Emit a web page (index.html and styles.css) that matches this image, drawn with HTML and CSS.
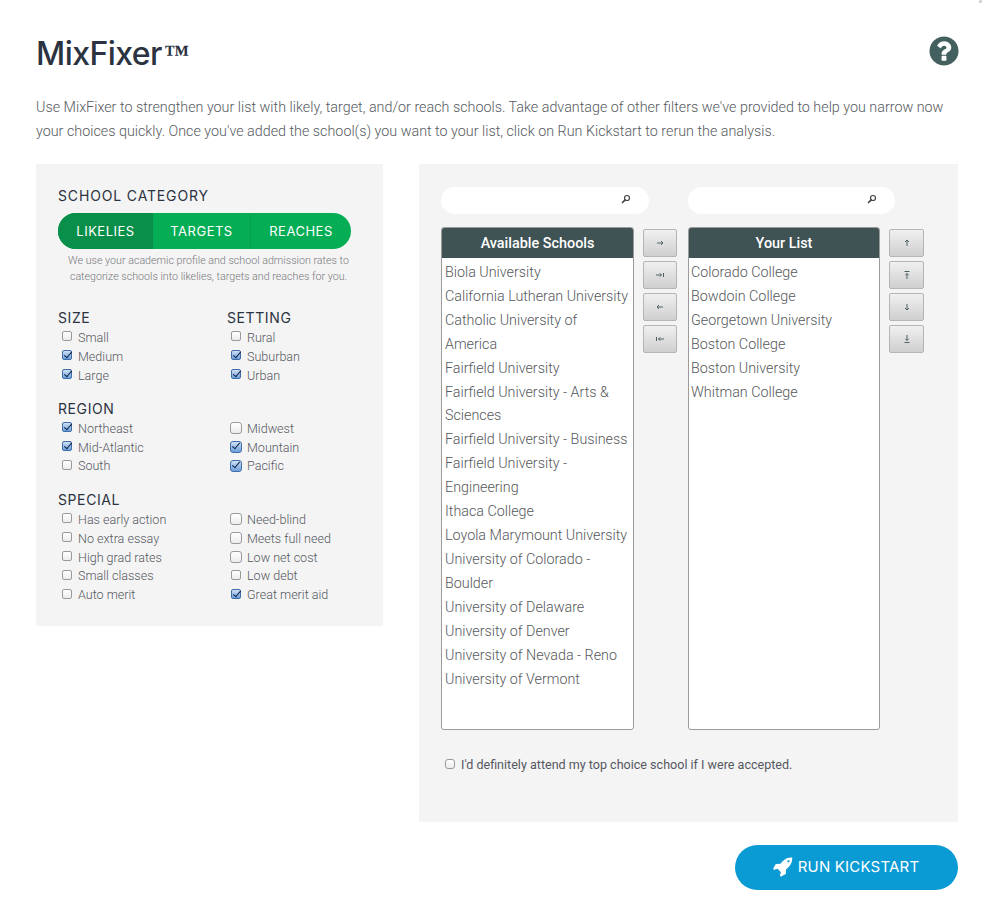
FILE: index.html
```html
<!DOCTYPE html>
<html lang="en">
<head>
<meta charset="utf-8">
<title>MixFixer</title>
<link rel="stylesheet" href="styles.css">
</head>
<body>
<span class="corner"></span>
<header class="top">
  <h1>MixFixer<span class="tm">™</span></h1>
  <svg class="help" viewBox="0 0 1792 1792"><path fill="#43605f" d="M1024 1376v-192q0-14-9-23t-23-9h-192q-14 0-23 9t-9 23v192q0 14 9 23t23 9h192q14 0 23-9t9-23zm256-672q0-88-55.5-163t-138.5-116-170-41q-243 0-371 213-15 24 8 42l132 100q7 6 19 6 16 0 25-12 53-68 86-92 34-24 86-24 48 0 85.5 26t37.5 59q0 38-20 61t-68 45q-63 28-115.5 86.5t-52.5 125.5v36q0 14 9 23t23 9h192q14 0 23-9t9-23q0-19 21.5-49.5t54.5-49.5q32-18 49-28.5t46-35 44.5-48 28-60.5 12.5-81zm384 192q0 209-103 385.5t-279.5 279.5-385.5 103-385.5-103-279.5-279.5-103-385.5 103-385.5 279.5-279.5 385.5-103 385.5 103 279.5 279.5 103 385.5z"/></svg>
</header>
<p class="intro">Use MixFixer to strengthen your list with likely, target, and/or reach schools. Take advantage of other filters we've provided to help you narrow now your choices quickly. Once you've added the school(s) you want to your list, click on Run Kickstart to rerun the analysis.</p>

<main class="columns">
  <aside class="filters">
    <h2 class="cat-title">SCHOOL CATEGORY</h2>
    <div class="segments">
      <span class="seg seg-a active">LIKELIES</span>
      <span class="seg seg-b">TARGETS</span>
      <span class="seg seg-c">REACHES</span>
    </div>
    <p class="desc">We use your academic profile and school admission rates to categorize schools into likelies, targets and reaches for you.</p>

    <div class="group group-size">
      <div class="col">
        <h3>SIZE</h3>
        <label class="chk"><input type="checkbox"><span>Small</span></label>
        <label class="chk"><input type="checkbox" checked><span>Medium</span></label>
        <label class="chk"><input type="checkbox" checked><span>Large</span></label>
      </div>
      <div class="col">
        <h3>SETTING</h3>
        <label class="chk"><input type="checkbox"><span>Rural</span></label>
        <label class="chk"><input type="checkbox" checked><span>Suburban</span></label>
        <label class="chk"><input type="checkbox" checked><span>Urban</span></label>
      </div>
    </div>

    <div class="group group-region">
      <div class="col">
        <h3>REGION</h3>
        <label class="chk"><input type="checkbox" checked><span>Northeast</span></label>
        <label class="chk"><input type="checkbox" checked><span>Mid-Atlantic</span></label>
        <label class="chk"><input type="checkbox"><span>South</span></label>
      </div>
      <div class="col">
        <h3 class="blank">&nbsp;</h3>
        <label class="chk big"><input type="checkbox"><span>Midwest</span></label>
        <label class="chk big"><input type="checkbox" checked><span>Mountain</span></label>
        <label class="chk big"><input type="checkbox" checked><span>Pacific</span></label>
      </div>
    </div>

    <div class="group group-special">
      <div class="col">
        <h3>SPECIAL</h3>
        <label class="chk"><input type="checkbox"><span>Has early action</span></label>
        <label class="chk"><input type="checkbox"><span>No extra essay</span></label>
        <label class="chk"><input type="checkbox"><span>High grad rates</span></label>
        <label class="chk"><input type="checkbox"><span>Small classes</span></label>
        <label class="chk"><input type="checkbox"><span>Auto merit</span></label>
      </div>
      <div class="col">
        <h3 class="blank">&nbsp;</h3>
        <label class="chk big"><input type="checkbox"><span>Need-blind</span></label>
        <label class="chk big"><input type="checkbox"><span>Meets full need</span></label>
        <label class="chk big"><input type="checkbox"><span>Low net cost</span></label>
        <label class="chk"><input type="checkbox"><span>Low debt</span></label>
        <label class="chk"><input type="checkbox" checked><span>Great merit aid</span></label>
      </div>
    </div>
  </aside>

  <section class="picker">
    <div class="lists">
      <div class="list-col">
        <div class="search"><svg class="mag" viewBox="0 0 12 12"><circle cx="7.2" cy="4.8" r="3" fill="none" stroke="#444" stroke-width="1.4"/><path d="M5 7 1.8 10.2" stroke="#444" stroke-width="2" stroke-linecap="round"/></svg></div>
        <div class="listbox">
          <div class="list-head">Available Schools</div>
          <ul>
            <li>Biola University</li>
            <li>California Lutheran University</li>
            <li>Catholic University of America</li>
            <li>Fairfield University</li>
            <li>Fairfield University - Arts &amp; Sciences</li>
            <li>Fairfield University - Business</li>
            <li>Fairfield University - Engineering</li>
            <li>Ithaca College</li>
            <li>Loyola Marymount University</li>
            <li>University of Colorado - Boulder</li>
            <li>University of Delaware</li>
            <li>University of Denver</li>
            <li>University of Nevada - Reno</li>
            <li>University of Vermont</li>
          </ul>
        </div>
      </div>
      <div class="btns">
        <button type="button"><svg viewBox="0 0 10 10"><path d="M2 5h6M6 3l2 2-2 2"/></svg></button>
        <button type="button"><svg viewBox="0 0 10 10"><path d="M1 5h5.500M4.800 3.300 6.500 5 4.800 6.700M8.500 3v4"/></svg></button>
        <button type="button"><svg viewBox="0 0 10 10"><path d="M2 5h6M4 3 2 5l2 2"/></svg></button>
        <button type="button"><svg viewBox="0 0 10 10"><path d="M9 5H3.500M5.200 3.300 3.500 5l1.700 1.700M1.500 3v4"/></svg></button>
      </div>
      <div class="list-col list-right">
        <div class="search"><svg class="mag" viewBox="0 0 12 12"><circle cx="7.2" cy="4.8" r="3" fill="none" stroke="#444" stroke-width="1.4"/><path d="M5 7 1.8 10.2" stroke="#444" stroke-width="2" stroke-linecap="round"/></svg></div>
        <div class="listbox">
          <div class="list-head">Your List</div>
          <ul>
            <li>Colorado College</li>
            <li>Bowdoin College</li>
            <li>Georgetown University</li>
            <li>Boston College</li>
            <li>Boston University</li>
            <li>Whitman College</li>
          </ul>
        </div>
      </div>
      <div class="btns btns-right">
        <button type="button"><svg viewBox="0 0 10 10"><path d="M5 8V2M3 4l2-2 2 2"/></svg></button>
        <button type="button"><svg viewBox="0 0 10 10"><path d="M2.500 1.500h5M5 9V3.500M3.300 5.200 5 3.500l1.700 1.700"/></svg></button>
        <button type="button"><svg viewBox="0 0 10 10"><path d="M5 2v6M3 6l2 2 2-2"/></svg></button>
        <button type="button"><svg viewBox="0 0 10 10"><path d="M2.500 8.500h5M5 1v5.500M3.300 4.800 5 6.500l1.700-1.700"/></svg></button>
      </div>
    </div>
    <label class="chk attend"><input type="checkbox"><span>I'd definitely attend my top choice school if I were accepted.</span></label>
  </section>
</main>

<footer class="actions">
  <button type="button" class="run"><svg viewBox="0 0 1792 1792"><path fill="#fff" d="M1504 448q0-40-28-68t-68-28-68 28-28 68 28 68 68 28 68-28 28-68zm224-288q0 249-75.500 430.500t-253.500 360.500q-81 80-195 176l-20 379q-2 16-16 26l-384 224q-7 4-16 4-12 0-23-9l-64-64q-13-14-8-32l85-276-281-281-276 85q-3 1-9 1-14 0-23-9l-64-64q-17-19-5-39l224-384q10-14 26-16l379-20q96-114 176-195 188-187 358-258t431-71q14 0 24 9.500t10 22.500z"/></svg>RUN KICKSTART</button>
</footer>
</body>
</html>
```
FILE: styles.css
```css
* { box-sizing: border-box; }
html, body { margin: 0; background: #fff; }
body {
  width: 984px;
  height: 910px;
  padding: 0 26px 0 36px;
  overflow: hidden;
  position: relative;
  font-family: Roboto, "Liberation Sans", sans-serif;
  font-weight: 300;
  color: #4b4f57;
}
.corner {
  position: absolute; right: 2px; top: 0;
  width: 3px; height: 3px; background: #c9c9c9; border-radius: 50%;
}
.top {
  display: flex; justify-content: space-between; align-items: flex-start;
  height: 95px; padding-top: 33px;
}
h1 {
  margin: 0; font-family: Inter, "Liberation Sans", sans-serif;
  font-weight: 500; font-size: 32px; line-height: 42px; color: #2b3240;
  letter-spacing: -0.55px;
}
.tm { font-family: "Liberation Serif", serif; font-size: 25px; font-weight: 700; letter-spacing: -0.5px; margin-left: 2px; position: relative; top: -3px; }
.help { width: 34px; height: 34px; margin: 1px -3px 0 0; }
.intro {
  margin: 0 0 23px; font-size: 14.32px; line-height: 24px; color: #565a60;
  height: 46px;
}
.columns { display: flex; gap: 36px; align-items: flex-start; }
.filters {
  width: 347px; height: 462px; background: #f4f4f4; padding: 22px 22px 0;
}
h2, h3, .seg, .run { font-family: Inter, "Liberation Sans", sans-serif; }
.cat-title {
  margin: 0; font-weight: 400; font-size: 14px; line-height: 20px; letter-spacing: 0.85px; color: #2b3240;
}
.segments {
  display: flex; width: 293px; height: 36px; margin-top: 7px;
  border-radius: 18px; overflow: hidden; background: #05ad55;
}
.seg {
  display: flex; align-items: center; justify-content: center;
  color: #fff; font-size: 13px; font-weight: 400; letter-spacing: 0.5px; padding-bottom: 1px;
}
.seg-a { width: 95px; background: #0a8f4a; }
.seg-b { width: 98px; border-right: 1px solid #07a04f; }
.seg-c { width: 100px; }
.desc {
  margin: 4px 0 0 -2px; width: 305px; font-size: 10.7px; line-height: 16px; text-align: center; color: #77797d;
}
.group { display: grid; grid-template-columns: 169px 124px; }
.group-size { margin-top: 23px; }
.group-region { margin-top: 14px; }
.group-special { margin-top: 14.5px; }
h3 {
  margin: 0; font-weight: 400; font-size: 14px; line-height: 20px; letter-spacing: 0.6px; color: #2b3240;
}
.col { display: flex; flex-direction: column; }
.chk {
  display: flex; align-items: center; height: 18.9px;
  font-size: 12.55px; color: #55585f; 
}
.chk input {
  appearance: none; -webkit-appearance: none;
  width: 10px; height: 10px; margin: 0 6px 2px 4px; flex: none;
  border: 1px solid #9a9a9a; border-radius: 2px;
  background: linear-gradient(#fff, #ececec);
  position: relative;
}
.chk.big input { width: 12px; height: 12px; margin: 0 5px 0 3px; border-radius: 3px; }
.chk input:checked {
  background: linear-gradient(#cfe0f5, #6d9fde);
  border-color: #3f6da5;
}
.chk input:checked::after {
  content: ""; position: absolute; left: 2.5px; top: -1px;
  width: 3px; height: 7px;
  border: solid #10233f; border-width: 0 1.8px 1.8px 0;
  transform: rotate(40deg);
}
.picker {
  width: 539px; height: 658px; background: #f4f4f4; padding: 23px 0 0 22px;
}
.lists { display: flex; align-items: flex-start; }
.list-col { width: 193px; }
.list-right { width: 192px; }
.search {
  width: 208px; height: 27px; background: #fff; border-radius: 14px; position: relative;
}
.list-right .search { width: 207px; }
.mag { position: absolute; right: 18px; top: 7px; width: 10px; height: 10px; }
.listbox {
  margin-top: 13px; height: 503px; background: #fff;
  border: 1px solid #9b9b9b; border-radius: 3px; overflow: hidden;
}
.list-head {
  height: 31px; margin: -1px -1px 0; background: #3f5355; color: #fff;
  font-weight: 500; font-size: 14.4px; line-height: 33px; text-align: center;
}
ul { list-style: none; margin: 0; padding: 3px 1px 0 3px; }
.list-right ul { padding-left: 2px; }
li { font-size: 14.3px; line-height: 23.7px; padding-bottom: 0.3px; color: #55585c; }
.btns {
  display: flex; flex-direction: column; gap: 4px;
  width: 35px; margin: 42px 10px 0 9px; flex: none;
}
.btns button {
  width: 34px; height: 28px; padding: 0; border: 1px solid #b5b5b5; border-radius: 2px;
  background: linear-gradient(#f0f0f0, #cfcfcf);
  display: flex; align-items: center; justify-content: center;
}
.btns-right button { width: 35px; }
.btns svg { width: 10px; height: 10px; fill: none; stroke: #4f6064; stroke-width: 1; }
.chk.attend { margin: 24px 0 0; height: 20px; font-size: 12.55px; font-weight: 400; }
.chk.attend input { width: 10px; height: 10px; margin: 0 6px 0 4px; border-radius: 3px; }
.actions { display: flex; justify-content: flex-end; margin-top: 23px; }
.run {
  width: 223px; height: 45px; border: 0; border-radius: 23px; background: #0a9ad4; color: #fff;
  font-size: 15px; font-weight: 400; letter-spacing: 0.2px;
  display: flex; align-items: center; justify-content: center; gap: 5px; padding: 0 2px 2px 0;
}
.run svg { width: 21px; height: 21px; }
```
